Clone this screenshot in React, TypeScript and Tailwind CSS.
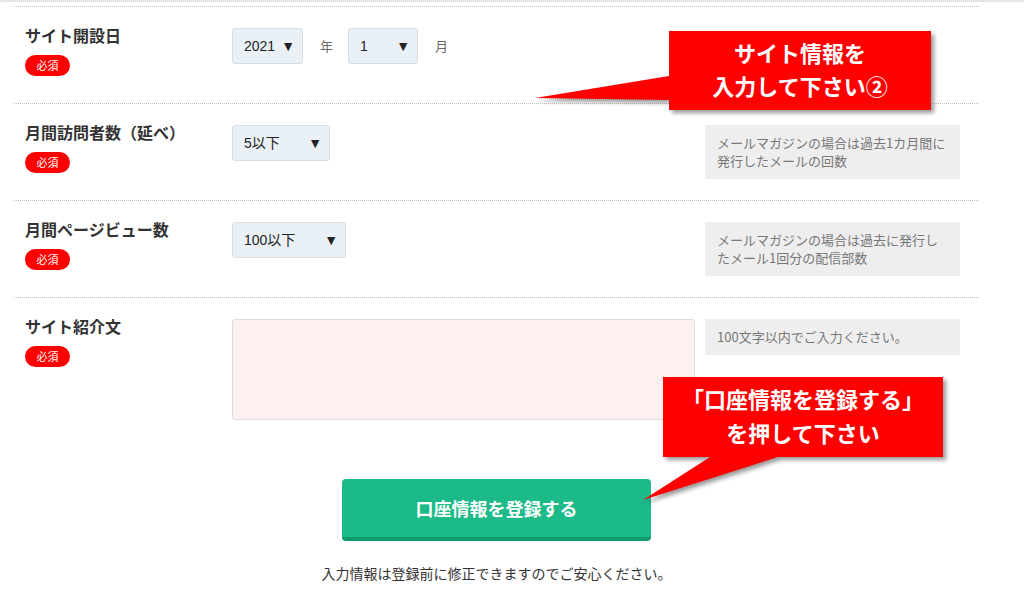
import React from "react"

const font = { fontFamily: '"Noto Sans CJK JP", "Liberation Sans", sans-serif' }

function Badge() {
  return (
    <span className="mt-[13px] flex h-[21px] w-[45px] items-center justify-center rounded-full bg-[#ff0000] text-[11px] leading-none text-white">
      必須
    </span>
  )
}

function Select({ value, width }: { value: string; width: string }) {
  return (
    <div
      className={`flex h-[36px] ${width} items-center justify-between rounded-[3px] border border-[#d8dde2] bg-[#eaf1f6] pl-[11px] pr-[7px] text-[14px] text-[#222]`}
      style={{ fontFamily: '"Liberation Sans", "Noto Sans CJK JP", sans-serif' }}
    >
      <span>{value}</span>
      <span className="text-[14px]">▼</span>
    </div>
  )
}

function Note({ children }: { children: React.ReactNode }) {
  return (
    <div className="w-[255px] bg-[#eeeeee] px-[12px] py-[9px] text-[13px] leading-[18px] text-[#777]">
      {children}
    </div>
  )
}

function Row({
  label,
  children,
  note,
}: {
  label: string
  children: React.ReactNode
  note?: React.ReactNode
}) {
  return (
    <div className="flex min-h-[97px] border-t border-dotted border-[#bdbdbd] pb-[21px] pl-[11px] pt-[21px]">
      <div className="w-[207px] shrink-0">
        <div className="text-[16px] font-bold leading-[14px] text-[#333]">{label}</div>
        <Badge />
      </div>
      <div className="w-[463px] shrink-0">{children}</div>
      {note && <div className="ml-[10px]">{note}</div>}
    </div>
  )
}

export default function App() {
  return (
    <div className="relative h-[593px] w-[1024px] overflow-hidden border-t-2 border-[#e4e4e9] bg-white" style={font}>
      <div className="ml-[14px] mt-[4px] w-[965px]">
        <Row label="サイト開設日">
          <div className="flex items-center">
            <Select value="2021" width="w-[71px]" />
            <span className="ml-[17px] mr-[15px] text-[13px] text-[#666]">年</span>
            <Select value="1" width="w-[70px]" />
            <span className="ml-[17px] text-[13px] text-[#666]">月</span>
          </div>
        </Row>
        <Row
          label="月間訪問者数（延べ）"
          note={<Note>メールマガジンの場合は過去1カ月間に発行したメールの回数</Note>}
        >
          <Select value="5以下" width="w-[98px]" />
        </Row>
        <Row
          label="月間ページビュー数"
          note={<Note>メールマガジンの場合は過去に発行したメール1回分の配信部数</Note>}
        >
          <Select value="100以下" width="w-[114px]" />
        </Row>
        <Row label="サイト紹介文" note={<Note>100文字以内でご入力ください。</Note>}>
          <div className="h-[101px] w-[463px] rounded-[3px] border border-[#dddddd] bg-[#fdf0f0]" />
        </Row>
        <div className="flex flex-col items-center pt-[38px]">
          <button className="flex h-[62px] w-[309px] items-center justify-center rounded-[4px] border-b-[4px] border-[#0e9a6c] bg-[#1cba88] text-[18px] font-bold text-white">
            口座情報を登録する
          </button>
          <p className="mt-[22px] text-[14px] text-[#333]">入力情報は登録前に修正できますのでご安心ください。</p>
        </div>
      </div>

      <svg className="pointer-events-none absolute left-0 top-0 drop-shadow-[3px_3px_2px_rgba(0,0,0,0.4)]" width="1024" height="593">
        <path d="M669 29 H931 V108 H669 V98 L535 96 L669 74 Z" fill="#ff0000" />
        <path d="M663 375 H943 V455 H778 L643 498 L710 455 H663 Z" fill="#ff0000" />
      </svg>
      <div className="absolute left-[669px] top-[29px] flex h-[79px] w-[262px] flex-col items-center justify-center pb-[4px] text-[22px] font-bold leading-[33px] text-white">
        <span>サイト情報を</span>
        <span>入力して下さい②</span>
      </div>
      <div className="absolute left-[663px] top-[375px] flex h-[80px] w-[280px] flex-col items-center justify-center pb-[4px] text-[22px] font-bold leading-[34px] text-white">
        <span>「口座情報を登録する」</span>
        <span>を押して下さい</span>
      </div>
    </div>
  )
}
